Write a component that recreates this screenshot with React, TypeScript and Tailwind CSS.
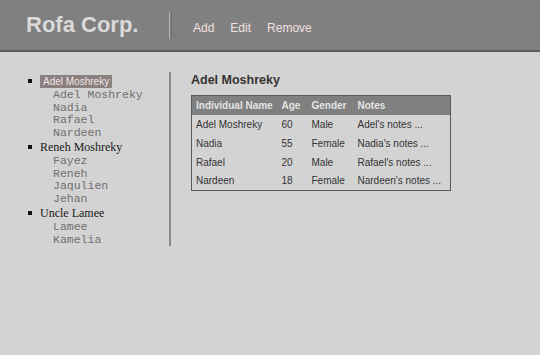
const families = [
  {
    name: "Adel Moshreky",
    selected: true,
    members: ["Adel Moshreky", "Nadia", "Rafael", "Nardeen"],
  },
  {
    name: "Reneh Moshreky",
    selected: false,
    members: ["Fayez", "Reneh", "Jaqulien", "Jehan"],
  },
  {
    name: "Uncle Lamee",
    selected: false,
    members: ["Lamee", "Kamelia"],
  },
];

const individuals = [
  { name: "Adel Moshreky", age: 60, gender: "Male", notes: "Adel's notes ..." },
  { name: "Nadia", age: 55, gender: "Female", notes: "Nadia's notes ..." },
  { name: "Rafael", age: 20, gender: "Male", notes: "Rafael's notes ..." },
  { name: "Nardeen", age: 18, gender: "Female", notes: "Nardeen's notes ..." },
];

export default function App() {
  return (
    <div className="min-h-[355px] bg-[#d3d3d3] font-['Liberation_Sans',Arial,sans-serif]">
      {/* Top bar */}
      <header className="h-[52px] bg-[#808080] border-b-2 border-[#5c5c5c] flex items-center">
        <h1 className="w-[169px] pl-[26px] text-[22px] font-bold text-[#dadada] leading-none">
          Rofa Corp.
        </h1>
        <div className="h-[27px] w-[3px] border-l border-[#b4b4b4] border-r-[#6e6e6e] border-r" />
        <nav className="flex gap-[16px] ml-[21px] mt-[6px] text-[12px] text-[#f2e0e0]">
          <a className="cursor-pointer">Add</a>
          <a className="cursor-pointer">Edit</a>
          <a className="cursor-pointer">Remove</a>
        </nav>
      </header>

      <div className="flex pt-[20px]">
        {/* Family tree */}
        <aside className="w-[171px] border-r-2 border-[#8a8a8a] pt-[1px] pl-[28px]">
          <ul>
            {families.map((family) => (
              <li key={family.name}>
                <div className="h-[16px] flex items-center">
                  <span className="w-[4px] h-[4px] bg-[#111] mr-[8px]" />
                  {family.selected ? (
                    <span className="bg-[#8b7f80] text-[#f1e6e6] text-[10px] px-[3px] leading-[13px]">
                      {family.name}
                    </span>
                  ) : (
                    <span className="font-['Liberation_Serif','Times_New_Roman',serif] text-[12px] text-[#1a1a1a]">
                      {family.name}
                    </span>
                  )}
                </div>
                <ul className="pl-[25px] font-['Liberation_Mono','Courier_New',monospace] text-[11.5px] leading-[12.5px] text-[#6f6f6f]">
                  {family.members.map((m) => (
                    <li key={m}>{m}</li>
                  ))}
                </ul>
              </li>
            ))}
          </ul>
        </aside>

        {/* Details */}
        <main className="pl-[20px]">
          <h2 className="text-[12.5px] font-bold text-[#333] leading-[16px]">Adel Moshreky</h2>
          <table className="mt-[7px] border border-[#5a5a5a] border-collapse text-[10px] text-[#333] text-left">
            <thead>
              <tr className="bg-[#808080] text-[#e4e4e4] h-[19px]">
                <th className="w-[86px] pl-[4px] font-bold">Individual Name</th>
                <th className="w-[30px] pl-[4px] font-bold">Age</th>
                <th className="w-[46px] pl-[4px] font-bold">Gender</th>
                <th className="w-[97px] pl-[4px] font-bold">Notes</th>
              </tr>
            </thead>
            <tbody>
              {individuals.map((p) => (
                <tr key={p.name} className="h-[19px]">
                  <td className="pl-[4px]">{p.name}</td>
                  <td className="pl-[4px]">{p.age}</td>
                  <td className="pl-[4px]">{p.gender}</td>
                  <td className="pl-[4px]">{p.notes}</td>
                </tr>
              ))}
            </tbody>
          </table>
        </main>
      </div>
    </div>
  );
}
